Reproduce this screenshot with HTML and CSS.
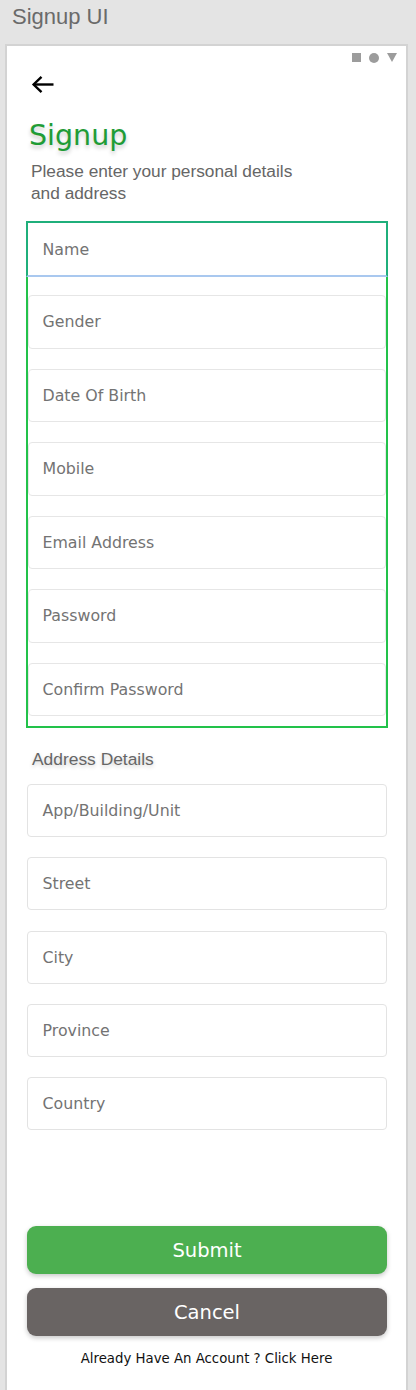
FILE: index.html
```html
<!DOCTYPE html>
<html lang="en">
<head>
<meta charset="utf-8">
<title>Signup UI</title>
<link rel="stylesheet" href="styles.css">
</head>
<body>
<div class="app-title">Signup UI</div>
<div class="frame">
  <div class="status">
    <span class="st-square"></span>
    <span class="st-circle"></span>
    <span class="st-tri"></span>
  </div>
  <svg class="back" width="24" height="20" viewBox="0 0 24 20" aria-hidden="true">
    <path d="M2.5 9.5 H22.5" stroke="#000" stroke-width="2.4" fill="none" stroke-linecap="butt"/>
    <path d="M10.5 1.8 L2.6 9.5 L10.5 17.2" stroke="#000" stroke-width="2.4" fill="none" stroke-linecap="butt" stroke-linejoin="miter"/>
  </svg>
  <h1 class="heading">Signup</h1>
  <p class="subtitle">Please enter your personal details and address</p>

  <div class="group">
    <div class="field field-focus">Name</div>
    <div class="field field-first">Gender</div>
    <div class="field">Date Of Birth</div>
    <div class="field">Mobile</div>
    <div class="field">Email Address</div>
    <div class="field">Password</div>
    <div class="field">Confirm Password</div>
  </div>

  <div class="section-label">Address Details</div>
  <div class="address">
    <div class="afield">App/Building/Unit</div>
    <div class="afield">Street</div>
    <div class="afield">City</div>
    <div class="afield">Province</div>
    <div class="afield">Country</div>
  </div>

  <div class="btn btn-submit">Submit</div>
  <div class="btn btn-cancel">Cancel</div>
  <div class="login-link">Already Have An Account ? Click Here</div>
</div>
</body>
</html>
```
FILE: styles.css
```css
* { box-sizing: border-box; }
html, body { margin: 0; padding: 0; }
body {
  background: #e4e4e4;
  font-family: "Liberation Sans", Arial, sans-serif;
  width: 416px;
  height: 1390px;
  overflow: hidden;
}
.app-title {
  height: 44px;
  padding: 6px 0 0 12px;
  font-size: 22px;
  line-height: 22px;
  color: #6a6a6a;
}
.frame {
  margin-left: 5px;
  width: 403px;
  min-height: 1346px;
  background: #fff;
  border: 2px solid #d3d3d3;
  border-bottom: 0;
  display: flex;
  flex-direction: column;
}
.status {
  display: flex;
  justify-content: flex-end;
  align-items: center;
  gap: 8px;
  padding: 7px 9px 0 0;
  height: 16px;
}
.st-square { width: 9px; height: 9px; background: #9c9c9c; }
.st-circle { width: 10px; height: 10px; border-radius: 50%; background: #9c9c9c; }
.st-tri {
  width: 0; height: 0;
  border-left: 5px solid transparent;
  border-right: 5px solid transparent;
  border-top: 9px solid #9c9c9c;
}
.back {
  display: block;
  margin: 13px 0 0 24px;
}
.heading {
  margin: 24px 0 0 22px;
  font-family: "DejaVu Sans", sans-serif;
  font-weight: normal;
  font-size: 28.5px;
  line-height: 34px;
  color: #1f9c36;
  text-shadow: 0 3px 4px rgba(0,0,0,0.22);
}
.subtitle {
  margin: 7px 0 0 24px;
  width: 280px;
  font-size: 17.3px;
  line-height: 22px;
  color: #666;
}
.group {
  margin: 17px 18px 0 19px;
  border: 2px solid #22c24a;
  padding-bottom: 10px;
  display: flex;
  flex-direction: column;
}
.field, .afield {
  font-family: "DejaVu Sans", sans-serif;
  font-size: 15.8px;
  color: #737373;
  display: flex;
  align-items: center;
  background: #fff;
}
.field {
  height: 53.5px;
  margin-top: 20px;
  border: 1px solid #e6e6e6;
  border-radius: 4px;
  padding-left: 13.5px;
}
.field-first { margin-top: 18px; }
.field-focus {
  margin: -2px -2px 0;
  height: 56px;
  border: 2px solid #1faf7b;
  border-bottom: 2px solid #a9c8ef;
  border-radius: 0;
  padding-left: 14.5px;
}
.section-label {
  margin: 21px 0 0 25px;
  font-size: 17.4px;
  line-height: 20px;
  color: #666;
  text-shadow: 0 2px 4px rgba(0,0,0,0.2);
}
.address {
  display: flex;
  flex-direction: column;
  margin: 0 19px 0 20px;
}
.afield {
  height: 53px;
  margin-top: 20.25px;
  border: 1px solid #e3e3e3;
  border-radius: 4px;
  padding-left: 14.5px;
}
.afield:first-child { margin-top: 15px; }
.btn {
  margin: 0 19px 0 20px;
  height: 48px;
  border-radius: 9px;
  display: flex;
  align-items: center;
  justify-content: center;
  font-family: "DejaVu Sans", sans-serif;
  font-size: 19.5px;
  color: #fff;
  box-shadow: 0 2px 5px rgba(0,0,0,0.22);
}
.btn-submit { margin-top: 96px; background: #4caf50; }
.btn-cancel { margin-top: 14px; background: #696463; }
.login-link {
  margin-top: 14px;
  text-align: center;
  font-family: "DejaVu Sans", sans-serif;
  font-size: 13.3px;
  line-height: 18px;
  color: #111;
}
```
